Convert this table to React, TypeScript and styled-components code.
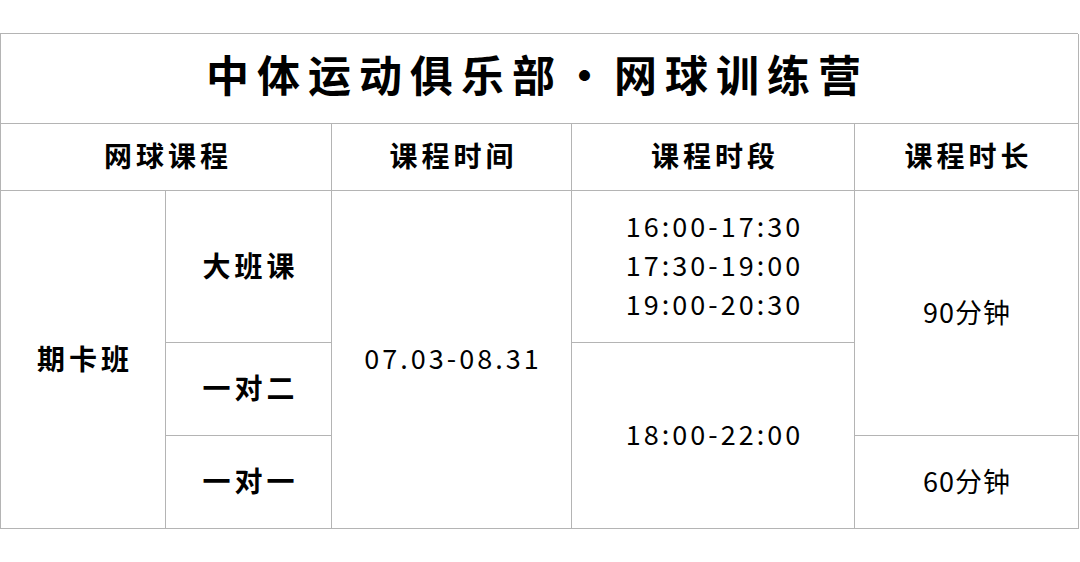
import styled, { createGlobalStyle } from "styled-components";

const GlobalStyle = createGlobalStyle`
  html, body {
    margin: 0;
    padding: 0;
    background: #fff;
  }
  body {
    font-family: "Noto Sans CJK SC", "Noto Sans", sans-serif;
    color: #000;
  }
`;

const Page = styled.div`
  padding-top: 33px;
  width: 1080px;
`;

const Table = styled.div`
  display: grid;
  grid-template-columns: 165px 166px 240px 283px 224px;
  grid-template-rows: 90px 67px 152px 93px 93px;
  width: 1078px;
  border-top: 1px solid #b4b4b4;
  border-left: 1px solid #b4b4b4;
  box-sizing: border-box;
`;

interface CellProps {
  $col: string;
  $row: string;
}

const Cell = styled.div<CellProps>`
  grid-column: ${(p) => p.$col};
  grid-row: ${(p) => p.$row};
  display: flex;
  flex-direction: column;
  align-items: center;
  justify-content: center;
  padding-bottom: 4px;
  border-right: 1px solid #b4b4b4;
  border-bottom: 1px solid #b4b4b4;
  box-sizing: border-box;
`;

const Title = styled.h1`
  margin: 0 0 6px 0;
  padding-right: 4px;
  font-size: 43px;
  font-weight: 700;
  letter-spacing: 8px;
  line-height: 1;
`;

const Label = styled.span`
  font-size: 28px;
  font-weight: 700;
  letter-spacing: 4px;
  margin-right: -4px;
  line-height: 1;
`;

const Value = styled.span<{ $spacing?: number }>`
  font-size: 27px;
  font-weight: 400;
  letter-spacing: ${(p) => p.$spacing ?? 3}px;
  margin-right: -${(p) => p.$spacing ?? 3}px;
  line-height: 39px;
`;

const slots = ["16:00-17:30", "17:30-19:00", "19:00-20:30"];

export default function App() {
  return (
    <>
      <GlobalStyle />
      <Page>
        <Table>
          <Cell $col="1 / 6" $row="1">
            <Title>中体运动俱乐部·网球训练营</Title>
          </Cell>

          <Cell $col="1 / 3" $row="2">
            <Label>网球课程</Label>
          </Cell>
          <Cell $col="3" $row="2">
            <Label>课程时间</Label>
          </Cell>
          <Cell $col="4" $row="2">
            <Label>课程时段</Label>
          </Cell>
          <Cell $col="5" $row="2">
            <Label>课程时长</Label>
          </Cell>

          <Cell $col="1" $row="3 / 6">
            <Label>期卡班</Label>
          </Cell>
          <Cell $col="2" $row="3">
            <Label>大班课</Label>
          </Cell>
          <Cell $col="2" $row="4">
            <Label>一对二</Label>
          </Cell>
          <Cell $col="2" $row="5">
            <Label>一对一</Label>
          </Cell>

          <Cell $col="3" $row="3 / 6">
            <Value>07.03-08.31</Value>
          </Cell>

          <Cell $col="4" $row="3">
            {slots.map((s) => (
              <Value key={s}>{s}</Value>
            ))}
          </Cell>
          <Cell $col="4" $row="4 / 6">
            <Value>18:00-22:00</Value>
          </Cell>

          <Cell $col="5" $row="3 / 5">
            <Value $spacing={1}>90分钟</Value>
          </Cell>
          <Cell $col="5" $row="5">
            <Value $spacing={1}>60分钟</Value>
          </Cell>
        </Table>
      </Page>
    </>
  );
}
